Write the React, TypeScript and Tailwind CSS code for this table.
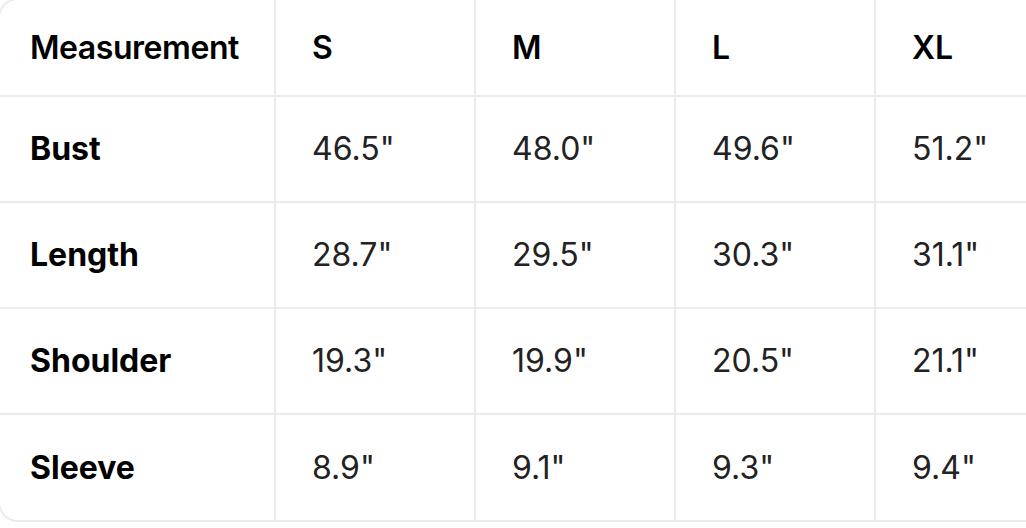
import React from "react";

const sizes = ["S", "M", "L", "XL"];
const rows: [string, string[]][] = [
  ["Bust", ['46.5"', '48.0"', '49.6"', '51.2"']],
  ["Length", ['28.7"', '29.5"', '30.3"', '31.1"']],
  ["Shoulder", ['19.3"', '19.9"', '20.5"', '21.1"']],
  ["Sleeve", ['8.9"', '9.1"', '9.3"', '9.4"']],
];

export default function App() {
  return (
    <div
      className="w-[1026px] h-[528px] overflow-hidden bg-white"
      style={{ fontFamily: "Inter, 'Liberation Sans', sans-serif" }}
    >
      <div className="-ml-[2px] -mt-[2px] w-[1140px] border-2 border-[#ebebeb] rounded-[20px] overflow-hidden">
        <div className="flex h-[97px] border-b-2 border-[#ebebeb]">
          <div className="w-[276px] shrink-0 border-r-2 border-[#ebebeb] flex items-center pl-[30px] text-[32px] font-semibold tracking-[-0.45px] text-black">
            Measurement
          </div>
          {sizes.map((s, i) => (
            <div
              key={s}
              className={`w-[200px] shrink-0 flex items-center pl-[36px] text-[32px] font-semibold text-black ${i < 3 ? "border-r-2 border-[#ebebeb]" : ""}`}
            >
              {s}
            </div>
          ))}
        </div>
        {rows.map(([label, vals], r) => (
          <div
            key={label}
            className={`flex ${r < 3 ? "h-[106px] border-b-2 border-[#ebebeb]" : "h-[105px]"}`}
          >
            <div className="w-[276px] shrink-0 border-r-2 border-[#ebebeb] flex items-center pl-[30px] text-[32px] font-bold text-black">
              {label}
            </div>
            {vals.map((v, i) => (
              <div
                key={i}
                className={`w-[200px] shrink-0 flex items-center pl-[36px] text-[32px] font-normal text-[#222222] ${i < 3 ? "border-r-2 border-[#ebebeb]" : ""}`}
              >
                {v}
              </div>
            ))}
          </div>
        ))}
      </div>
    </div>
  );
}
